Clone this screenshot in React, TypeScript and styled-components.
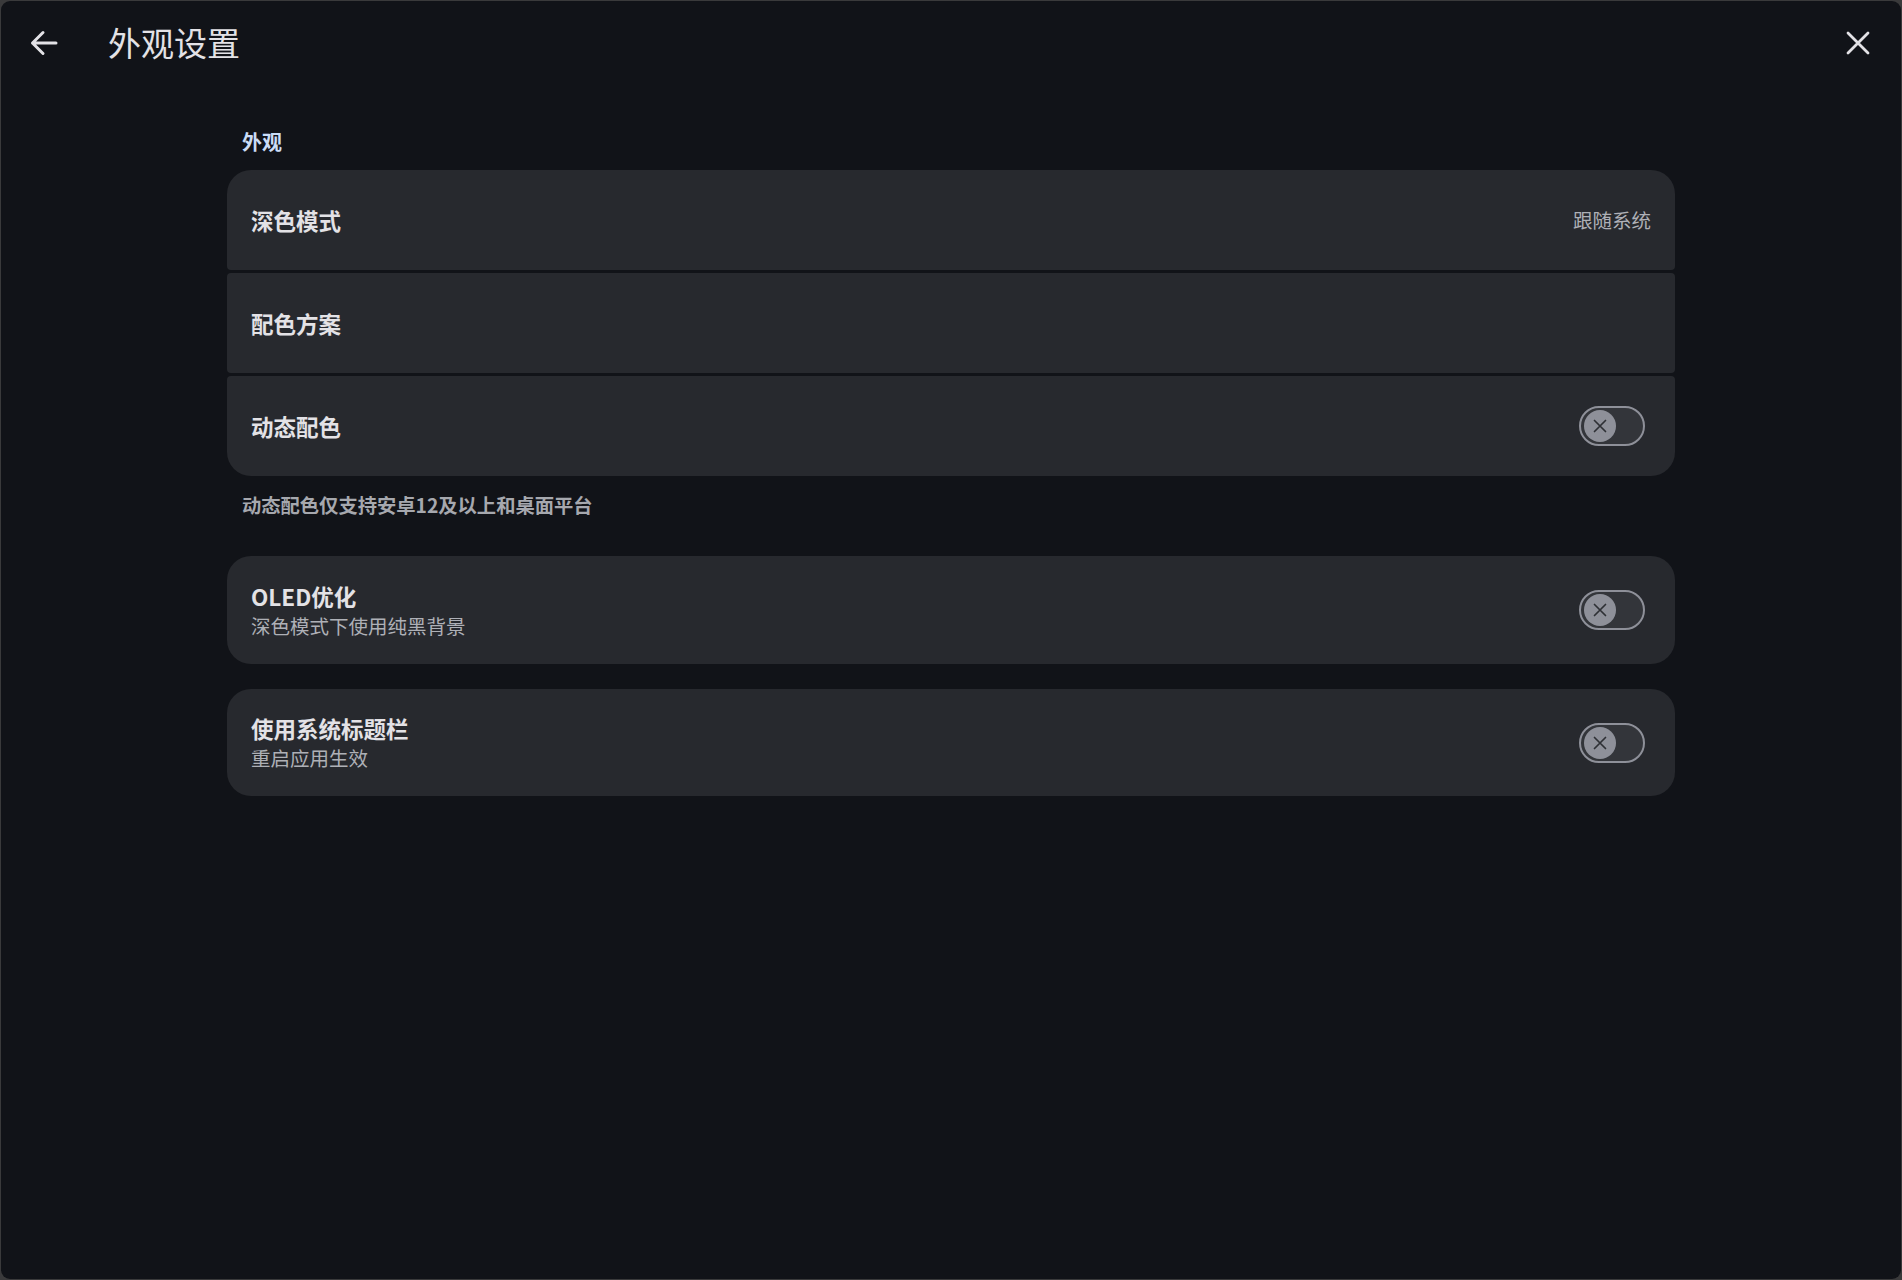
import React from "react";
import styled, { createGlobalStyle } from "styled-components";

const GlobalStyle = createGlobalStyle`
  html, body {
    margin: 0;
    padding: 0;
    background: #3a3a3b;
  }
  body {
    font-family: "Noto Sans CJK SC", "Noto Sans", sans-serif;
    -webkit-font-smoothing: antialiased;
  }
  * { box-sizing: border-box; }
`;

const Frame = styled.div`
  width: 1902px;
  height: 1280px;
  padding: 1px;
  background: #3a3a3b;
`;

const Window = styled.div`
  width: 100%;
  height: 100%;
  background: #111318;
  border-radius: 9px;
  overflow: hidden;
  display: flex;
  flex-direction: column;
`;

const TopBar = styled.header`
  height: 83px;
  display: flex;
  align-items: center;
  padding: 0 21px;
  flex-shrink: 0;
`;

const IconButton = styled.button`
  width: 44px;
  height: 44px;
  border: none;
  background: transparent;
  padding: 0;
  display: flex;
  align-items: center;
  justify-content: center;
  color: #e3e2e6;
  cursor: pointer;
`;

const Title = styled.h1`
  margin: 0 0 2px 42px;
  flex: 1;
  font-size: 33px;
  font-weight: 400;
  color: #e3e2e6;
  line-height: 40px;
`;

const Content = styled.main`
  width: 1448px;
  margin: 0 auto;
  padding-top: 44px;
  display: flex;
  flex-direction: column;
`;

const SectionHeader = styled.div`
  padding: 0 15px;
  font-size: 20px;
  font-weight: 700;
  line-height: 28px;
  color: #cadcf6;
  margin-bottom: 14px;
`;

const Group = styled.div`
  display: flex;
  flex-direction: column;
  gap: 3px;
`;

const Card = styled.div<{ $pos: "first" | "middle" | "last" | "single"; $h: number }>`
  height: ${(p) => p.$h}px;
  background: #27292e;
  display: flex;
  align-items: center;
  padding: 0 24px;
  border-radius: ${(p) =>
    p.$pos === "single"
      ? "24px"
      : p.$pos === "first"
      ? "24px 24px 4px 4px"
      : p.$pos === "last"
      ? "4px 4px 24px 24px"
      : "4px"};
`;

const TextCol = styled.div`
  flex: 1;
  display: flex;
  flex-direction: column;
`;

const ItemTitle = styled.div`
  font-size: 22.5px;
  font-weight: 700;
  line-height: 31px;
  color: #e3e2e6;
`;

const ItemSub = styled.div`
  font-size: 19.5px;
  font-weight: 400;
  line-height: 28px;
  color: #aeb0b6;
`;

const TrailingText = styled.div`
  font-size: 19.5px;
  font-weight: 400;
  color: #aeb0b6;
  line-height: 28px;
`;

const Helper = styled.div`
  padding: 15px 15px 0;
  font-size: 19.3px;
  font-weight: 700;
  line-height: 28px;
  color: #a6a8ae;
  margin-bottom: 37px;
`;

const Spacer = styled.div<{ $h: number }>`
  height: ${(p) => p.$h}px;
`;

const SwitchTrack = styled.div`
  width: 66px;
  height: 40px;
  border-radius: 20px;
  border: 2.5px solid #8e9099;
  background: #33353a;
  display: flex;
  align-items: center;
  padding-left: 2.5px;
  margin-right: 6px;
`;

const SwitchThumb = styled.div`
  width: 32px;
  height: 32px;
  border-radius: 50%;
  background: #8e9099;
  display: flex;
  align-items: center;
  justify-content: center;
`;

const Switch = () => (
  <SwitchTrack>
    <SwitchThumb>
      <svg width="14" height="14" viewBox="0 0 14 14">
        <path d="M1.5 1.5L12.5 12.5M12.5 1.5L1.5 12.5" stroke="#2e3035" strokeWidth="1.7" strokeLinecap="round" />
      </svg>
    </SwitchThumb>
  </SwitchTrack>
);

export default function App() {
  return (
    <>
      <GlobalStyle />
      <Frame>
        <Window>
          <TopBar>
            <IconButton aria-label="back">
              <svg width="28" height="26" viewBox="0 0 28 26">
                <path
                  d="M2.5 13H26M13 2.5L2.5 13L13 23.5"
                  fill="none"
                  stroke="currentColor"
                  strokeWidth="3"
                  strokeLinecap="round"
                  strokeLinejoin="round"
                />
              </svg>
            </IconButton>
            <Title>外观设置</Title>
            <IconButton aria-label="close">
              <svg width="24" height="24" viewBox="0 0 24 24">
                <path
                  d="M2 2L22 22M22 2L2 22"
                  fill="none"
                  stroke="currentColor"
                  strokeWidth="2.8"
                  strokeLinecap="round"
                />
              </svg>
            </IconButton>
          </TopBar>
          <Content>
            <SectionHeader>外观</SectionHeader>
            <Group>
              <Card $pos="first" $h={100}>
                <TextCol>
                  <ItemTitle>深色模式</ItemTitle>
                </TextCol>
                <TrailingText>跟随系统</TrailingText>
              </Card>
              <Card $pos="middle" $h={100}>
                <TextCol>
                  <ItemTitle>配色方案</ItemTitle>
                </TextCol>
              </Card>
              <Card $pos="last" $h={100}>
                <TextCol>
                  <ItemTitle>动态配色</ItemTitle>
                </TextCol>
                <Switch />
              </Card>
            </Group>
            <Helper>动态配色仅支持安卓12及以上和桌面平台</Helper>
            <Card $pos="single" $h={108}>
              <TextCol>
                <ItemTitle>OLED优化</ItemTitle>
                <ItemSub>深色模式下使用纯黑背景</ItemSub>
              </TextCol>
              <Switch />
            </Card>
            <Spacer $h={25} />
            <Card $pos="single" $h={107}>
              <TextCol>
                <ItemTitle>使用系统标题栏</ItemTitle>
                <ItemSub>重启应用生效</ItemSub>
              </TextCol>
              <Switch />
            </Card>
          </Content>
        </Window>
      </Frame>
    </>
  );
}
